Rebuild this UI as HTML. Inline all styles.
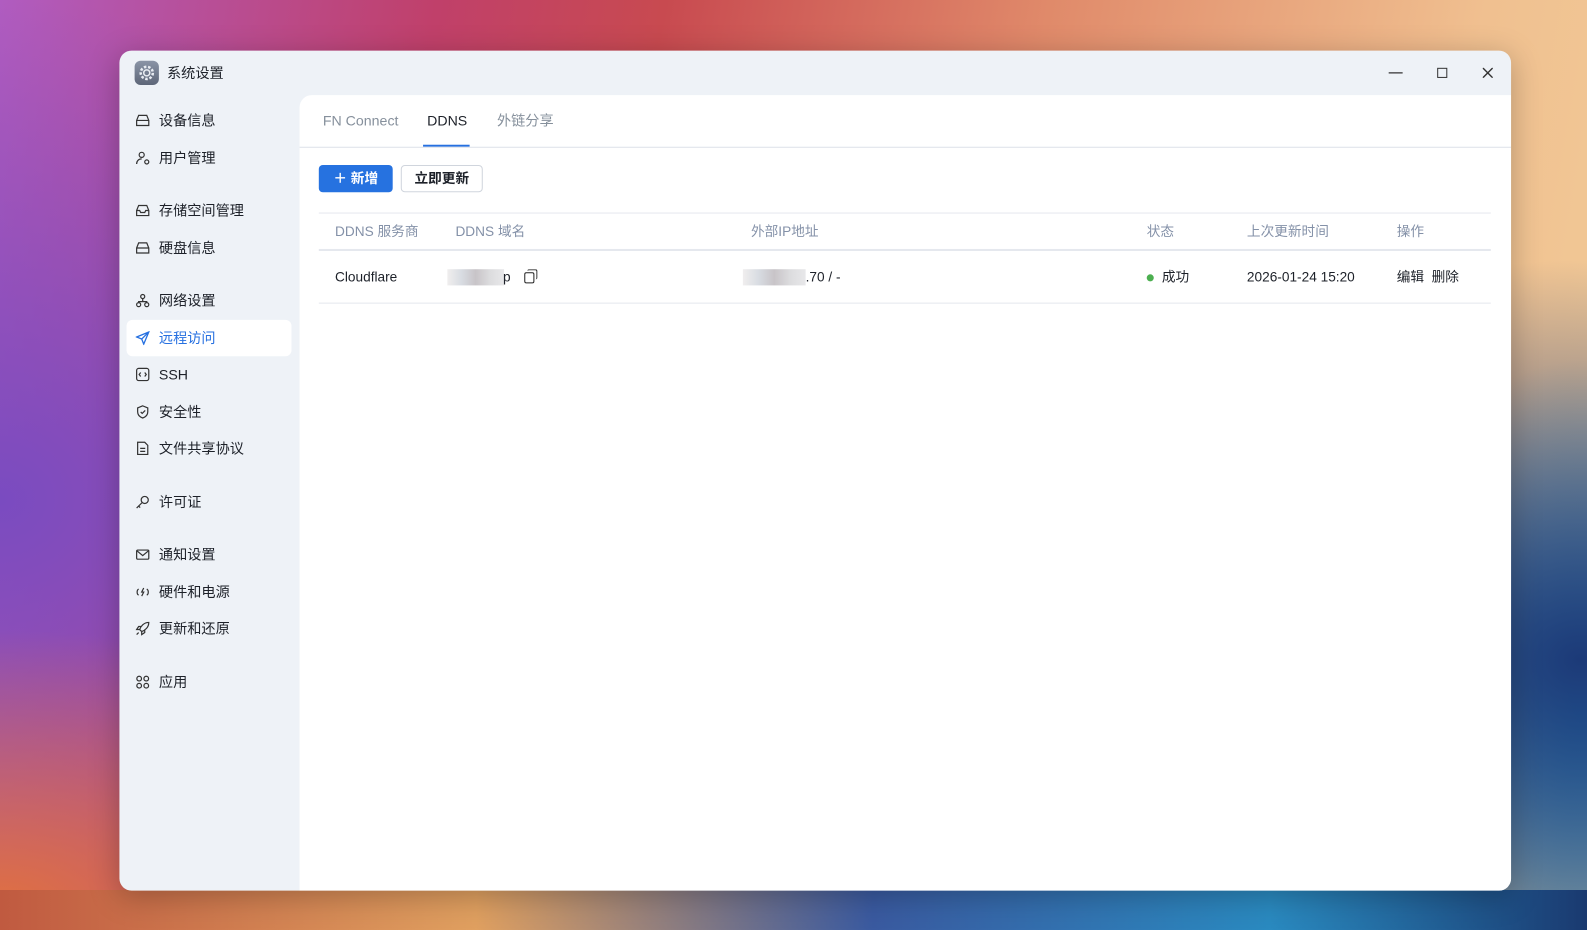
<!DOCTYPE html>
<html><head><meta charset="utf-8"><style>
*{box-sizing:border-box;margin:0;padding:0}
body{width:1587px;height:930px;overflow:hidden;position:relative;font-family:"Liberation Sans","Noto Sans CJK SC",sans-serif;
background:
radial-gradient(ellipse 500px 400px at 1580px 660px,#1c3a78 0%,rgba(28,58,120,0) 100%),
radial-gradient(ellipse 300px 500px at 1580px 710px,#2a9ad0 0%,rgba(42,154,208,0) 70%),
radial-gradient(ellipse 700px 400px at 0px 910px,#e07040 0%,rgba(224,112,64,0) 70%),
radial-gradient(ellipse 600px 500px at 0px 500px,#7a4bc0 0%,rgba(122,75,192,0) 100%),
linear-gradient(100deg,#b05cc0 0%,#c0406a 25%,#c84a50 38%,#e08a6a 60%,#f0c090 85%,#f2cc98 100%);}
.bot{position:absolute;left:0;right:0;top:890px;height:40px;background:linear-gradient(90deg,#c05a40,#e0a060 30%,#3a5aa0 55%,#2a8ac0 80%,#1a3a70)}
.sc{position:absolute;left:0;top:0;width:1568px;height:919px;transform:scale(1.0121);transform-origin:0 0}
.win{position:absolute;left:118px;top:50px;width:1375px;height:830px;background:#eef2f7;border-radius:12px;overflow:hidden;box-shadow:0 6px 30px rgba(0,0,0,.25)}
.title{position:absolute;left:47px;top:12px;font-size:14px;line-height:20px;color:#1d2129}
.logo{position:absolute;left:15px;top:10px;width:24px;height:24px;border-radius:6px;background:linear-gradient(#8a94a6,#5d6678)}
.side{position:absolute;left:0;top:0;width:177px}
.it{position:absolute;left:7px;width:163px;height:36px;font-size:14px;color:#1d2129;padding-left:32px;padding-top:8px;line-height:20px}
.it.act{background:#fff;border-radius:6px;color:#2670e0}
.ic{position:absolute;left:9px;top:11px;width:14px;height:14px}
.main{position:absolute;left:178px;top:44px;right:0;bottom:0;background:#fff;border-top-left-radius:12px}
.tab{position:absolute;top:15px;font-size:14px;line-height:20px;color:#86909c}
.btn{position:absolute;top:69px;height:27px;border-radius:4px;font-size:13.5px;line-height:27px;text-align:center}
.th,.td{position:absolute;font-size:13.5px;line-height:20px}
.th{top:125px;color:#8491a8}
.td{top:170px;color:#1d2129}
.blur{position:absolute;background:linear-gradient(90deg,#f0eeee,#d8dce2,#c8c4c8,#dcdcde,#e8e8ea);height:16px}
</style></head><body>
<div class="bot"></div>
<div class="sc">
<div class="win">
<div class="logo"><svg width="24" height="24" viewBox="0 0 24 24"><circle cx="12" cy="12" r="6" fill="none" stroke="#e8ecf2" stroke-width="2.5" stroke-dasharray="2.5 1.7"/><circle cx="12" cy="12" r="3" fill="none" stroke="#e8ecf2" stroke-width="1.5"/></svg></div>
<div class="title">系统设置</div>
<svg style="position:absolute;left:1254px;top:16px" width="14" height="12" viewBox="0 0 14 12"><path d="M0 6h14" stroke="#333" stroke-width="1.3"/></svg>
<div style="position:absolute;left:1302px;top:17px;width:10px;height:10px;border:1.4px solid #333"></div>
<svg style="position:absolute;left:1347px;top:17px" width="10" height="10" viewBox="0 0 10 10"><path d="M0 0 10 10M10 0 0 10" stroke="#333" stroke-width="1.4"/></svg>
<div class="side">
<div class="it" style="top:51px"><svg class="ic" viewBox="0 0 14 14" fill="none" stroke="#333" stroke-width="1.2"><path d="M1 7 3 2h8l2 5v5H1z M1 7h12"/></svg>设备信息</div>
<div class="it" style="top:88px"><svg class="ic" viewBox="0 0 14 14" fill="none" stroke="#333" stroke-width="1.2"><circle cx="6" cy="4" r="2.5"/><path d="M1 13c0-3 2-5 5-5"/><circle cx="11" cy="11" r="2"/></svg>用户管理</div>
<div class="it" style="top:140px"><svg class="ic" viewBox="0 0 14 14" fill="none" stroke="#333" stroke-width="1.2"><path d="M1 7 3 2h8l2 5v5H1z M1 7h3l1 2h4l1-2h3"/></svg>存储空间管理</div>
<div class="it" style="top:177px"><svg class="ic" viewBox="0 0 14 14" fill="none" stroke="#333" stroke-width="1.2"><path d="M1 7 3 2h8l2 5v5H1z M1 7h12"/></svg>硬盘信息</div>
<div class="it" style="top:229px"><svg class="ic" viewBox="0 0 14 14" fill="none" stroke="#333" stroke-width="1.2"><circle cx="7" cy="3" r="2"/><circle cx="3" cy="11" r="2"/><circle cx="11" cy="11" r="2"/><path d="M7 5v3M3 9V8h8v1"/></svg>网络设置</div>
<div class="it act" style="top:266px"><svg class="ic" viewBox="0 0 14 14" fill="none" stroke="#2670e0" stroke-width="1.3"><path d="M13 1 1 6l5 2 2 5z M6 8l7-7"/></svg>远程访问</div>
<div class="it" style="top:302px"><svg class="ic" viewBox="0 0 14 14" fill="none" stroke="#333" stroke-width="1.2"><rect x="1" y="1" width="12" height="12" rx="2"/><path d="M5 5 3.5 7 5 9M9 5l1.5 2L9 9"/></svg>SSH</div>
<div class="it" style="top:339px"><svg class="ic" viewBox="0 0 14 14" fill="none" stroke="#333" stroke-width="1.2"><path d="M7 1 2 3v4c0 3 2 5 5 6 3-1 5-3 5-6V3z M5 7l1.5 1.5L9.5 5.5"/></svg>安全性</div>
<div class="it" style="top:375px"><svg class="ic" viewBox="0 0 14 14" fill="none" stroke="#333" stroke-width="1.2"><path d="M2 1h7l3 3v9H2z M4.5 7h5M4.5 10h5"/></svg>文件共享协议</div>
<div class="it" style="top:428px"><svg class="ic" viewBox="0 0 14 14" fill="none" stroke="#333" stroke-width="1.2"><circle cx="9" cy="5" r="3.5"/><path d="M6.5 7.5 1 13M3 11l1.5 1.5"/></svg>许可证</div>
<div class="it" style="top:480px"><svg class="ic" viewBox="0 0 14 14" fill="none" stroke="#333" stroke-width="1.2"><rect x="1" y="2.5" width="12" height="9" rx="1"/><path d="M1 3l6 5 6-5"/></svg>通知设置</div>
<div class="it" style="top:517px"><svg class="ic" viewBox="0 0 14 14" fill="none" stroke="#333" stroke-width="1.2"><path d="M3 4C1 5 1 9 3 10M11 4c2 1 2 5 0 6M8 3 6 7h2l-2 4"/></svg>硬件和电源</div>
<div class="it" style="top:553px"><svg class="ic" viewBox="0 0 14 14" fill="none" stroke="#333" stroke-width="1.2"><path d="M13 1C8 1 5 5 4 8l2 2c3-1 7-4 7-9z M4 8 1 8l2-3h3M6 10v3l3-2V8M3 11l-2 2"/></svg>更新和还原</div>
<div class="it" style="top:606px"><svg class="ic" viewBox="0 0 14 14" fill="none" stroke="#333" stroke-width="1.2"><circle cx="3.5" cy="3.5" r="2.3"/><circle cx="10.5" cy="3.5" r="2.3"/><circle cx="3.5" cy="10.5" r="2.3"/><circle cx="10.5" cy="10.5" r="2.3"/></svg>应用</div>
</div>
<div class="main">
<div class="tab" style="left:23px">FN Connect</div>
<div class="tab" style="left:126px;color:#1d2129">DDNS</div>
<div class="tab" style="left:195px">外链分享</div>
<div style="position:absolute;left:122px;top:49px;width:46px;height:2px;background:#2670e0"></div>
<div style="position:absolute;left:0;right:0;top:51px;height:1px;background:#dde1e8"></div>
<div class="btn" style="left:19px;width:73px;background:#2672e0;color:#fff;font-weight:bold">＋ 新增</div>
<div class="btn" style="left:100px;width:81px;border:1px solid #d0d5dd;color:#1d2129;font-weight:bold;line-height:25px">立即更新</div>
<div style="position:absolute;left:19px;width:1158px;top:116px;height:1px;background:#e5e8ee"></div>
<div style="position:absolute;left:19px;width:1158px;top:152px;height:2px;background:#e5e8ee"></div>
<div style="position:absolute;left:19px;width:1158px;top:205px;height:1px;background:#e5e8ee"></div>
<div class="th" style="left:35px">DDNS 服务商</div>
<div class="th" style="left:154px">DDNS 域名</div>
<div class="th" style="left:446px">外部IP地址</div>
<div class="th" style="left:837px">状态</div>
<div class="th" style="left:936px">上次更新时间</div>
<div class="th" style="left:1084px">操作</div>
<div class="td" style="left:35px">Cloudflare</div>
<div class="blur" style="left:146px;top:172px;width:56px"></div>
<div class="td" style="left:201px">p</div>
<div style="position:absolute;left:222px;top:175px;width:10px;height:11px;border:1.5px solid #222;border-radius:2px"></div>
<div style="position:absolute;left:225px;top:172px;width:10px;height:10px;border-top:1.5px solid #222;border-right:1.5px solid #222;border-radius:2px"></div>
<div class="blur" style="left:438px;top:172px;width:62px"></div>
<div class="td" style="left:500px">.70 / -</div>
<div style="position:absolute;left:837px;top:177px;width:7px;height:7px;border-radius:50%;background:#4caf50"></div>
<div class="td" style="left:852px">成功</div>
<div class="td" style="left:936px">2026-01-24 15:20</div>
<div class="td" style="left:1084px">编辑&nbsp;&nbsp;删除</div>
</div>
</div>
</div>
</body></html>
